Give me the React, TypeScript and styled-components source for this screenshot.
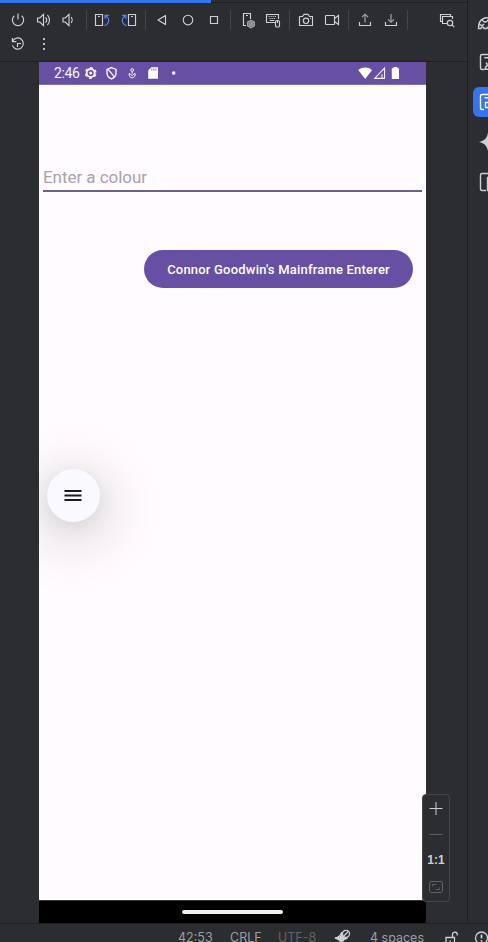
import React from "react";
import styled, { createGlobalStyle } from "styled-components";

const Global = createGlobalStyle`
  * { box-sizing: border-box; }
  html, body { margin: 0; padding: 0; background: #2b2d30; overflow: hidden; }
  svg { display: block; flex: none; }
`;

const Window = styled.div`
  width: 488px;
  height: 942px;
  display: flex;
  flex-direction: column;
  overflow: hidden;
  background: #2b2d30;
  font-family: Inter, sans-serif;
`;
const Workspace = styled.div`
  flex: 1;
  min-height: 0;
  display: flex;
`;
const DevicePane = styled.div`
  width: 467px;
  flex: none;
  display: flex;
  flex-direction: column;
`;
const ProgressTrack = styled.div`
  height: 3px;
  border-bottom: 1px solid #1e1f22;
  flex: none;
`;
const ProgressBar = styled.div`
  width: 211px;
  height: 3px;
  background: #3574f0;
`;
const Toolbar = styled.div`
  height: 59px;
  flex: none;
  padding: 5px 7px 0 5px;
  border-bottom: 1px solid #1e1f22;
`;
const ToolRow = styled.div`
  display: flex;
  height: 24px;
`;
const ToolIcon = styled.svg.attrs({ viewBox: "0 0 26 24" })<{ $end?: boolean }>`
  width: 26px;
  height: 24px;
  margin-left: ${(p) => (p.$end ? "auto" : "0")};
  fill: none;
  stroke: #ced0d6;
  stroke-width: 1.15;
`;
const Divider = styled.div`
  width: 1px;
  height: 20px;
  margin: 2px 3px;
  background: #43454a;
`;
const Stage = styled.div`
  flex: 1;
  min-height: 0;
  padding-left: 39px;
  position: relative;
`;
const Phone = styled.div`
  width: 387px;
  height: 861px;
  display: flex;
  flex-direction: column;
  background: #fffbff;
  overflow: hidden;
`;
const StatusBar = styled.div`
  height: 23px;
  flex: none;
  display: flex;
  align-items: center;
  padding-left: 15px;
  background: #6750a4;
  border-bottom: 1px solid #8572b5;
  color: #f7f2fc;
  font: 400 14px/22px Roboto, sans-serif;
`;
const Clock = styled.span`
  width: 28.5px;
  letter-spacing: -0.35px;
`;
const StatusIconGroup = styled.div`
  flex: 1;
  display: flex;
`;
const SignalIcons = styled.svg`
  width: 45px;
  height: 22px;
  margin: 0 24px 0 auto;
  fill: #fff;
`;
const Screen = styled.div`
  flex: 1;
  position: relative;
  padding: 80px 4px 0;
`;
const Field = styled.div`
  height: 27px;
  border-bottom: 2px solid #6b6380;
  color: #a6a3a8;
  font: 400 17px/25px Roboto, sans-serif;
  letter-spacing: -0.04px;
`;
const EnterButton = styled.button`
  display: block;
  width: 269px;
  height: 38px;
  margin: 58px 9px 0 auto;
  padding: 0;
  border: 0;
  border-radius: 19px;
  background: #6750a4;
  color: #fff;
  font: 500 13px/39px Roboto, sans-serif;
  letter-spacing: 0.2px;
  white-space: nowrap;
`;
const Fab = styled.div`
  position: absolute;
  left: 7.5px;
  top: 384px;
  width: 53px;
  height: 53px;
  border-radius: 50%;
  background: #f9f9ff;
  box-shadow: 0 12px 60px 8px rgba(0, 0, 0, 0.17), 0 5px 22px rgba(0, 0, 0, 0.08);
  display: flex;
  align-items: center;
  justify-content: center;
`;
const NavBar = styled.div`
  height: 23px;
  flex: none;
  background: #000;
  border-top: 1px solid #39363b;
  display: flex;
  align-items: center;
  justify-content: center;
`;
const HomePill = styled.div`
  width: 101px;
  height: 4px;
  border-radius: 2px;
  background: #f0f0f0;
`;
const ZoomPanel = styled.div`
  position: absolute;
  left: 422px;
  top: 732px;
  width: 28px;
  height: 108px;
  padding: 0 1px 2px 0;
  border: 1px solid #43454a;
  border-radius: 4px;
  background: #2b2d30;
  display: grid;
  grid-template-rows: repeat(4, 26px);
  justify-items: center;
  align-items: center;
`;
const ZoomLabel = styled.span`
  color: #ced0d6;
  font: 600 12px/28px "Liberation Sans", sans-serif;
  font-weight: 700;
`;
const ZoomIcon = styled.svg.attrs({ viewBox: "0 0 26 26" })<{ $dim?: boolean }>`
  width: 26px;
  height: 26px;
  fill: none;
  stroke: ${(p) => (p.$dim ? "#5e6065" : "#ced0d6")};
`;
const Rail = styled.div`
  width: 21px;
  border-left: 1px solid #1e1f22;
  padding: 7px 0 0 5px;
  display: flex;
  flex-direction: column;
  gap: 10px;
  overflow: hidden;
`;
const RailItem = styled.div<{ $active?: boolean }>`
  width: 30px;
  height: 30px;
  flex: none;
  border-radius: 6px;
  background: ${(p) => (p.$active ? "#3574f0" : "transparent")};
  color: ${(p) => (p.$active ? "#fff" : "#ced0d6")};
`;
const RailIcon = styled.svg.attrs({ viewBox: "0 0 30 30" })`
  width: 30px;
  height: 30px;
  fill: none;
  stroke: currentColor;
  stroke-width: 1.4;
`;
const Footer = styled.div`
  height: 19px;
  flex: none;
  border-top: 1px solid #1e1f22;
  padding: 5px 0 0 178px;
  display: flex;
  overflow: hidden;
  white-space: nowrap;
  color: #9b9ea4;
  font: 400 12.5px/17px Inter, sans-serif;
`;
const FooterText = styled.span<{ $w: number; $dim?: boolean }>`
  width: ${(p) => p.$w}px;
  flex: none;
  color: ${(p) => (p.$dim ? "#626469" : "inherit")};
`;
const FooterIcon = styled.svg<{ $gap?: number }>`
  width: 18px;
  height: 18px;
  margin-right: ${(p) => p.$gap || 0}px;
  fill: none;
  stroke: #ced0d6;
  stroke-width: 1.3;
`;

const Tools = () => (
  <Toolbar>
    <ToolRow>
      <ToolIcon><path d="M9.3 7.8a5.6 5.6 0 1 0 7.4 0M13 5.5v6" /></ToolIcon>
      <ToolIcon><path d="M6.5 10v4h2.3l3.7 3.7V6.3L8.8 10zM14.5 9.3a4 4 0 0 1 0 5.4M16.4 6.8a7.5 7.5 0 0 1 0 10.4" /></ToolIcon>
      <ToolIcon><path d="M6 10v4h2.3l3.7 3.7V6.3L8.3 10zM14 9.2a4 4 0 0 1 0 5.6" /></ToolIcon>
      <Divider />
      <ToolIcon>
        <path d="M5.5 6.5h7v11h-7zM8 8.5h2" />
        <path d="M14.5 17.6c5-1.6 5.6-6.7 1.4-9.6M15 10.8V7.3h3.8" stroke="#548af7" />
      </ToolIcon>
      <ToolIcon>
        <path d="M12.5 6.5h7v11h-7zM15 8.5h2" />
        <path d="M10.5 17.6c-5-1.6-5.6-6.7-1.4-9.6M10 10.8V7.3H6.2" stroke="#548af7" />
      </ToolIcon>
      <Divider />
      <ToolIcon><path d="M16.5 7.5v9L9 12z" strokeLinejoin="round" /></ToolIcon>
      <ToolIcon><circle cx="13" cy="12" r="4.8" /></ToolIcon>
      <ToolIcon><path d="M9.5 8.5h7v7h-7z" /></ToolIcon>
      <Divider />
      <ToolIcon>
        <path d="M12 17.5H9.5v-12h7V11M12 7.5h2" />
        <path d="m17 12.3 3.4 1.9v3.7L17 19.8l-3.4-1.9v-3.7z" fill="#6f737a" stroke="#a5a8ae" />
        <circle cx="17" cy="16" r="1.3" stroke="#a5a8ae" />
      </ToolIcon>
      <ToolIcon>
        <path d="M15 14.5H6.5v-8h12V11M9.7 12.5h4.6" />
        <path d="M8.5 8.5h8M9.5 10.5h6" strokeDasharray="1.1 1" />
        <rect x="15.5" y="12.5" width="4" height="6.5" rx="1.6" />
        <path d="M17.5 12.5v2.5" />
      </ToolIcon>
      <Divider />
      <ToolIcon>
        <path d="M6.5 8.5h3L11 6.3h4l1.5 2.2h3v9h-13z" strokeLinejoin="round" />
        <circle cx="13" cy="12.8" r="2.7" />
        <path d="M17 10.2h1" />
      </ToolIcon>
      <ToolIcon>
        <rect x="6.5" y="7.5" width="9" height="9" rx=".7" />
        <path d="m15.5 10.5 4-3v9l-4-3" />
      </ToolIcon>
      <Divider />
      <ToolIcon>
        <path d="M7.5 14v3.5h11V14" />
        <path d="M13 14.5v-8M10 9.2l3-3 3 3" stroke="#a5a8ae" />
      </ToolIcon>
      <ToolIcon>
        <path d="M7.5 14v3.5h11V14" />
        <path d="M13 6v8M10 11.3l3 3 3-3" stroke="#a5a8ae" />
      </ToolIcon>
      <Divider />
      <ToolIcon $end>
        <path d="M8.5 13.5h-2v-7h10v2" />
        <path d="M13 15.5H8.5v-7h10V11" />
        <circle cx="16" cy="15" r="2.7" />
        <path d="m18 17 2.3 2.2" />
      </ToolIcon>
    </ToolRow>
    <ToolRow>
      <ToolIcon><path d="M7.6 9.2A5.6 5.6 0 1 1 7.4 13.4M7.4 6v3.6h4M12.5 15v-3.5H16" /></ToolIcon>
      <ToolIcon><path d="M12.1 7h1.8M12.1 12h1.8M12.1 17h1.8" strokeWidth="1.8" /></ToolIcon>
    </ToolRow>
  </Toolbar>
);

const StatusIcons = () => (
  <StatusIconGroup>
    <svg width="84" height="22" viewBox="83 0 84 22" fill="none" stroke="#f7f2fc">
      <circle cx="90.7" cy="11" r="4" strokeWidth="1.8" />
      <circle cx="90.7" cy="11" r="5.3" strokeWidth="1.3" strokeDasharray="2.8 2.75" strokeDashoffset="-1.4" />
      <circle cx="90.7" cy="11" r="1.5" fill="#f7f2fc" stroke="none" />
      <path d="M111.5 5.6 116 7.4v3.5c0 2.8-1.7 4.8-4.5 6-2.8-1.2-4.5-3.2-4.5-6V7.4z" strokeWidth="1.4" />
      <path d="m108 7.2 6.6 8" strokeWidth="1.3" />
      <circle cx="132.2" cy="8" r="1.4" />
      <path d="M132.2 9.4v2.4M129.3 11.4c-.6 2.6.8 4.4 2.9 4.4s3.5-1.8 2.9-4.4l-2.9 2.2z" strokeWidth="1" />
      <path d="M151.4 5.2h6.6v11.6h-9.8V8.4z" fill="#fff" stroke="none" />
      <path d="M151.8 6.5v2M153.8 6.5v2M155.8 6.5v2" stroke="#6750a4" strokeWidth=".8" />
    </svg>
    <svg width="12" height="22" viewBox="0 0 12 22"><circle cx="6.7" cy="11" r="1.8" fill="#f7f2fc" /></svg>
    <SignalIcons viewBox="357 0 45 22">
      <path d="M358.2 8c3.8-3.3 10-3.3 13.8 0L365.2 17z" />
      <path d="M384.5 6.2v10.2h-9.8zM382 12.3v4" fill="none" stroke="#f7f2fc" strokeWidth="1.1" />
      <path d="M393.5 5h3.8v1.3h1.7V17h-7.2V6.3h1.7z" />
    </SignalIcons>
  </StatusIconGroup>
);

export default function App() {
  return (
    <>
      <Global />
      <Window>
        <Workspace>
          <DevicePane>
            <ProgressTrack><ProgressBar /></ProgressTrack>
            <Tools />
            <Stage>
              <Phone>
                <StatusBar>
                  <Clock>2:46</Clock>
                  <StatusIcons />
                </StatusBar>
                <Screen>
                  <Field>Enter a colour</Field>
                  <EnterButton>Connor Goodwin's Mainframe Enterer</EnterButton>
                  <Fab>
                    <svg width="18" height="14" viewBox="0 0 18 14" stroke="#1c1b1f" strokeWidth="1.9">
                      <path d="M.5 2h17M.5 6.5h17M.5 11h17" />
                    </svg>
                  </Fab>
                </Screen>
                <NavBar><HomePill /></NavBar>
              </Phone>
              <ZoomPanel>
                <ZoomIcon><path d="M6.5 13.5h13M13 7v13" /></ZoomIcon>
                <ZoomIcon $dim><path d="M6.5 13.5h13" /></ZoomIcon>
                <ZoomLabel>1:1</ZoomLabel>
                <ZoomIcon $dim>
                  <rect x="6.5" y="8.5" width="13" height="11" rx="1.5" />
                  <path d="M9.5 13.5v-2H13M16.5 14.5v2H13" />
                </ZoomIcon>
              </ZoomPanel>
            </Stage>
          </DevicePane>
          <Rail>
            <RailItem>
              <RailIcon>
                <path d="M5.5 21.5c0-5 1.5-8.5 5-10 2-1 4-1 5.5 0 1-3 5-4 7-1 1.5 4-2 5-3 7v4h-3c0-2-3-2-3 0h-3c0-2-3-2-3 0zM9 12.5c2 4 5 3 7-1M6.5 17c1.5 2 3 2 4.5 0" />
              </RailIcon>
            </RailItem>
            <RailItem>
              <RailIcon><path d="M11 22.5H9A1.5 1.5 0 0 1 7.5 21V9A1.5 1.5 0 0 1 9 7.5h10v5M11.5 10.7h4M12 22.3c1-6 9-6 10 0zM13 15.5l1.3 2" /></RailIcon>
            </RailItem>
            <RailItem $active>
              <RailIcon><path d="M11 22.5H9A1.5 1.5 0 0 1 7.5 21V9A1.5 1.5 0 0 1 9 7.5h10v6M11.5 10.7h4M12.5 15.5h10v5h-10zM15 22.8h6" /></RailIcon>
            </RailItem>
            <RailItem>
              <RailIcon><path d="M15 5.5c1 5.5 3.5 8.5 9 9.5-5.5 1-8 4-9 9-1-5-3.5-8-9-9 5.5-1 8-4 9-9.5z" fill="currentColor" stroke="none" /></RailIcon>
            </RailItem>
            <RailItem>
              <RailIcon><path d="M13 23.5H9A1.5 1.5 0 0 1 7.5 22V8A1.5 1.5 0 0 1 9 6.5h12v3M14.5 10.5h9v13h-9z" /></RailIcon>
            </RailItem>
          </Rail>
        </Workspace>
        <Footer>
          <FooterText $w={52}>42:53</FooterText>
          <FooterText $w={48}>CRLF</FooterText>
          <FooterText $w={56} $dim>UTF-8</FooterText>
          <FooterIcon viewBox="0 0 18 18" $gap={18}>
            <path d="M7.5 3c.3 4 1.8 5.200 6 6-4 .9-5.700 2.500-6 6C6.700 11.500 5 9.700 1 9c4.200-1 6-2.500 6.500-6z" fill="#ced0d6" stroke="#ced0d6" />
            <circle cx="12" cy="4.800" r="3.500" fill="#2b2d30" />
            <path d="m9.700 7.200 4.600-4.800" />
          </FooterIcon>
          <FooterText $w={74}>4 spaces</FooterText>
          <FooterIcon viewBox="0 0 18 18" $gap={12}>
            <path d="M2 8.500h8.500V17H2zM8.500 8.500v-3a2.400 2.400 0 0 1 4.800 0v1M6.200 11.500v3" />
          </FooterIcon>
          <FooterIcon viewBox="0 0 18 18"><circle cx="7.500" cy="9" r="6" /><path d="M7.500 5.500v4M7.500 11v1.500" strokeWidth="1.7" /></FooterIcon>
        </Footer>
      </Window>
    </>
  );
}
